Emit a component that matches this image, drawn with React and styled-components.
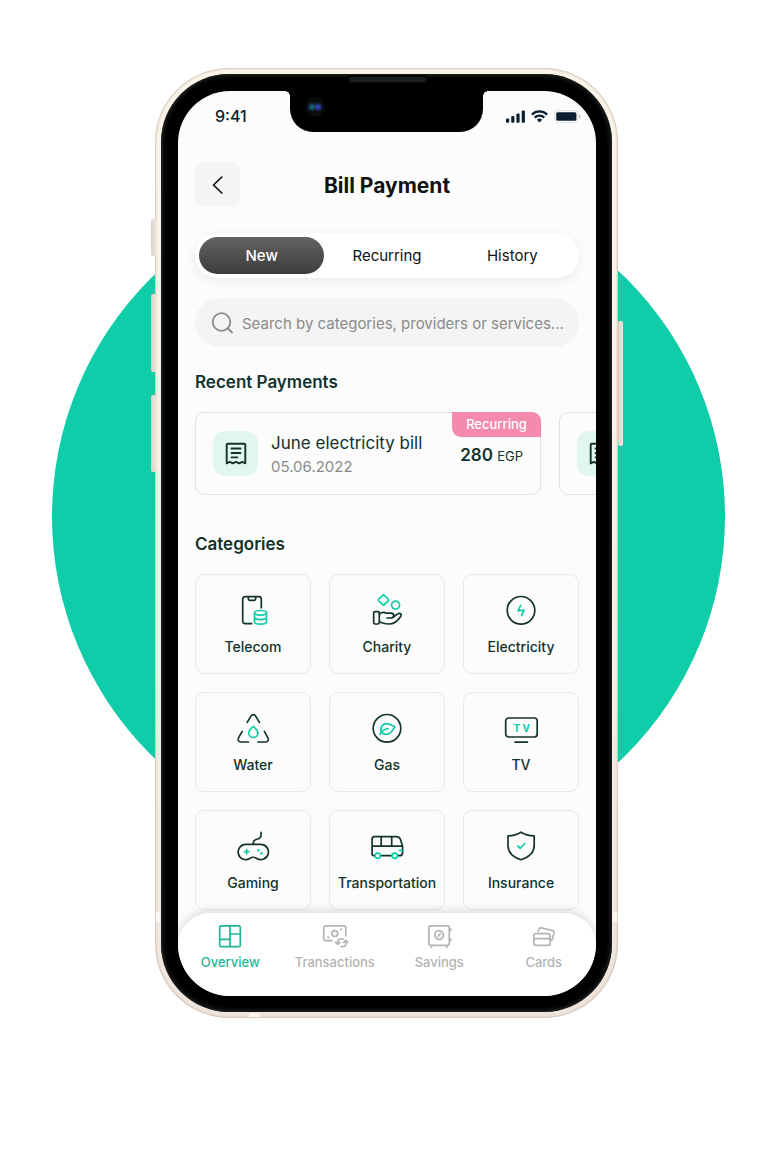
import React, { useState } from 'react';
import styled, { createGlobalStyle, css } from 'styled-components';

const color = {
  teal: '#0fcda8',
  tealDark: '#1fb594',
  ink: '#12332c',
  navy: '#0b1f30',
  black: '#101214',
  muted: '#8b8b8b',
  faint: '#b3b3b3',
  surface: '#fcfcfc',
  field: '#f4f4f4',
  line: '#e9e9e9',
  lilac: '#e3e1ee',
  mint: '#e2f6f0',
  pink: '#f48aac',
};

const GlobalStyle = createGlobalStyle`
  *, *::before, *::after { box-sizing: border-box; }
  body {
    margin: 0;
    background: #fff;
    font-family: Inter, "Liberation Sans", sans-serif;
    color: ${color.ink};
  }
  button, input { font: inherit; color: inherit; }
  h1, h2, p { margin: 0; }
`;

const Stage = styled.div`
  position: relative;
  display: flex;
  justify-content: center;
  min-height: 100vh;
  padding: 68px 16px 155px 21px;
  overflow: hidden;
  align-items: flex-start;
`;

const Disc = styled.div`
  position: absolute;
  top: 180px;
  left: 50%;
  width: 673px;
  height: 673px;
  margin-left: -332px;
  border-radius: 50%;
  background: ${color.teal};
`;

const Phone = styled.div`
  position: relative;
  width: 100%;
  max-width: 463px;
  padding: 6px;
  border-radius: 74px;
  background: linear-gradient(#fbf5e9, #f7f0e6 60%, #efe4dc);
  box-shadow: inset 0 0 2px 1px #cfc2b6;
`;

const SideKey = styled.span`
  position: absolute;
  top: ${(p) => p.$top}px;
  ${(p) => p.$side}: ${(p) => (p.$side === 'left' ? -4 : -5)}px;
  width: 5px;
  height: ${(p) => p.$length}px;
  border-radius: 2px;
  background: linear-gradient(90deg, #d9d0c6, #f1eae1);
`;

const Antenna = styled.span`
  position: absolute;
  background: #fbf8f3;
  ${(p) => p.$side === 'bottom'
    ? css`bottom: 1px; left: 94px; width: 11px; height: 4px;`
    : css`bottom: 96px; ${p.$side}: 1px; width: 4px; height: 10px;`}
`;

const Bezel = styled.div`
  position: relative;
  padding: 17px 16px 16px 17px;
  border-radius: 68px;
  background: #000;
  box-shadow: inset 0 0 5px 1px #2c2f2e;
`;

const Speaker = styled.span`
  position: absolute;
  top: 1px;
  left: 50%;
  width: 81px;
  height: 9px;
  margin-left: -40px;
  border: 2px solid #050505;
  border-radius: 5px;
  background: #1d1e1f;
`;

const Screen = styled.div`
  position: relative;
  display: flex;
  flex-direction: column;
  border-radius: 52px;
  overflow: hidden;
  background: ${color.surface};
`;

const Notch = styled.div`
  position: absolute;
  top: 0;
  left: 50%;
  width: 193px;
  height: 41px;
  margin-left: -97px;
  border-radius: 0 0 23px 23px;
  background: #000;

  &::before, &::after {
    content: '';
    position: absolute;
    top: 0;
    width: 4px;
    height: 4px;
  }
  &::before { right: 100%; background: radial-gradient(circle at 0 100%, transparent 3px, #000 4px); }
  &::after { left: 100%; background: radial-gradient(circle at 100% 100%, transparent 3px, #000 4px); }
`;

const Camera = styled.span`
  position: absolute;
  top: 6px;
  left: 15px;
  width: 20px;
  height: 20px;
  border-radius: 50%;
  background:
    radial-gradient(circle at 7px 10px, #1c5f78 1px, transparent 5px),
    radial-gradient(circle at 13px 10px, #3244b8 1px, transparent 5px),
    #0a0b0e;
`;

const StatusBar = styled.div`
  display: flex;
  justify-content: space-between;
  align-items: center;
  padding: 15px 15px 0 37px;
  color: ${color.navy};
`;

const Clock = styled.span`
  font-size: 16px;
  line-height: 20px;
  font-weight: 500;
`;

const StatusIcons = styled.div`
  display: flex;
  align-items: center;
  gap: 6px;
`;

const Main = styled.main`
  display: flex;
  flex-direction: column;
  padding: 36px 17px 3px 17px;
`;

const Header = styled.header`
  display: grid;
  grid-template-columns: 45px 1fr 45px;
  align-items: center;
  margin-bottom: 26px;
`;

const BackButton = styled.button`
  display: grid;
  place-items: center;
  height: 45px;
  padding: 0;
  border: 0;
  border-radius: 8px;
  background: #f5f5f5;
  color: ${color.black};
`;

const Title = styled.h1`
  padding-top: 2px;
  color: ${color.black};
  font-size: 21px;
  line-height: 28px;
  font-weight: 700;
  text-align: center;
`;

const Tabs = styled.div`
  display: flex;
  padding: 4px;
  margin-bottom: 20px;
  border-radius: 24px;
  background: #fff;
  box-shadow: 0 3px 12px rgba(0, 0, 0, 0.07);
`;

const Tab = styled.button`
  flex: 1;
  height: 37px;
  padding: 0;
  border: 0;
  border-radius: 19px;
  background: none;
  color: ${color.black};
  font-size: 15px;
  ${(p) => p.$active && css`
    background: linear-gradient(#636363, #3c3c3c);
    color: #fff;
    font-weight: 500;
  `}
`;

const Search = styled.label`
  display: flex;
  align-items: center;
  gap: 9px;
  height: 49px;
  padding: 0 10px 0 16px;
  margin-bottom: 23px;
  border-radius: 25px;
  background: ${color.field};
  color: ${color.muted};
`;

const SearchInput = styled.input`
  flex: 1;
  min-width: 0;
  padding: 2px 0 0;
  border: 0;
  outline: 0;
  background: none;
  font-size: 15px;
  line-height: 20px;
  text-overflow: ellipsis;
  &::placeholder { color: ${color.muted}; opacity: 1; }
`;

const SectionTitle = styled.h2`
  margin-bottom: 18px;
  font-size: 17px;
  line-height: 24px;
  font-weight: 600;
`;

const PaymentList = styled.div`
  display: flex;
  gap: 18px;
  margin: 0 -17px 37px 0;
  overflow-x: auto;
  scrollbar-width: none;
`;

const PaymentCard = styled.article`
  position: relative;
  flex: none;
  display: flex;
  align-items: center;
  gap: 13px;
  width: calc(100% - 55px);
  height: 83px;
  padding: 0 17px;
  border: 1px solid ${color.lilac};
  border-radius: 9px;
`;

const Tile = styled.span`
  flex: none;
  display: grid;
  place-items: center;
  width: 45px;
  height: 45px;
  border-radius: 12px;
  background: ${color.mint};
`;

const PaymentText = styled.div`
  flex: 1;
  min-width: 0;
  padding-top: 2px;
`;

const PaymentName = styled.p`
  font-size: 17px;
  line-height: 24px;
`;

const PaymentDate = styled.p`
  color: ${color.muted};
  font-size: 15px;
  line-height: 24px;
`;

const Amount = styled.p`
  padding-top: 3px;
  font-size: 17px;
  line-height: 24px;
  font-weight: 600;
`;

const Currency = styled.span`
  font-size: 13px;
  font-weight: 400;
`;

const Badge = styled.span`
  position: absolute;
  top: -1px;
  right: -1px;
  width: 89px;
  border-radius: 0 9px 0 9px;
  background: ${color.pink};
  color: #fff;
  font-size: 13px;
  line-height: 25px;
  font-weight: 500;
  text-align: center;
`;

const Grid = styled.div`
  display: grid;
  grid-template-columns: repeat(3, minmax(0, 1fr));
  gap: 18px;
`;

const Category = styled.button`
  display: flex;
  flex-direction: column;
  align-items: center;
  gap: 9px;
  height: 100px;
  padding: 17px 0 0;
  border: 1px solid ${color.line};
  border-radius: 9px;
  background: none;
  font-size: 14px;
  line-height: 20px;
  font-weight: 500;
  svg { flex: none; }
`;

const BottomNav = styled.nav`
  position: relative;
  display: flex;
  height: 83px;
  padding-top: 9px;
  border-radius: 32px 32px 0 0;
  background: #fff;
  box-shadow: 0 -2px 10px rgba(0, 0, 0, 0.14);
`;

const NavLink = styled.a`
  flex: 1;
  display: flex;
  flex-direction: column;
  align-items: center;
  gap: 2px;
  color: ${(p) => (p.$active ? color.tealDark : color.faint)};
  font-size: 13px;
  line-height: 20px;
  font-weight: 500;
  text-decoration: none;
`;

function Icon({ size = 36, weight = 1.7, children }) {
  return (
    <svg
      width={size}
      height={size}
      viewBox={`0 0 ${size} ${size}`}
      fill="none"
      stroke="currentColor"
      strokeWidth={weight}
      strokeLinecap="round"
      strokeLinejoin="round"
      aria-hidden="true"
    >
      {children}
    </svg>
  );
}

const t = color.teal;

const categories = [
  {
    name: 'Telecom',
    art: (
      <>
        <path d="M16.7 31.7H10.2a2.5 2.5 0 0 1-2.5-2.5V7.2a2.5 2.5 0 0 1 2.5-2.5h13.6a2.5 2.5 0 0 1 2.5 2.5v8.5" />
        <path d="M13.3 5v1.8c0 1 .6 1.6 1.6 1.6h4.2c1 0 1.6-.6 1.6-1.6V5" />
        <g stroke={t}>
          <ellipse cx="25.5" cy="20.8" rx="6" ry="2.3" />
          <path d="M19.5 20.8v9c0 3.2 12 3.2 12 0v-9M19.5 25.3c0 3 12 3 12 0" />
        </g>
      </>
    ),
  },
  {
    name: 'Charity',
    art: (
      <>
        <path stroke={t} d="M13.6 3.4a1.3 1.3 0 0 1 1.8 0l3.8 3.7a1.3 1.3 0 0 1 0 1.8l-3.8 3.7a1.3 1.3 0 0 1-1.8 0l-3.8-3.7a1.3 1.3 0 0 1 0-1.8z" />
        <circle stroke={t} cx="26.6" cy="13.1" r="4" />
        <rect x="4.7" y="19.7" width="5.6" height="12.3" rx="1.4" />
        <path d="M10.4 22c2.2-1.7 4.4-2 6.6-.9h4.5c2 0 3.3.9 3.3 2.4s-1.3 2.5-3.3 2.5H18" />
        <path d="M24.6 24.8l4.2-2.9c2.1-1.4 4.3.3 3 2.3-2.6 4.2-6.3 7.8-11.8 7.8-4 0-6-1-9.6-2" />
      </>
    ),
  },
  {
    name: 'Electricity',
    art: (
      <>
        <circle cx="18" cy="18.3" r="13.8" />
        <path stroke={t} d="M17.7 13.4L15 18.8l6-.6-2.4 5.2" />
      </>
    ),
  },
  {
    name: 'Water',
    art: (
      <>
        <path d="M12.2 12.4l3.9-6.5a2.6 2.6 0 0 1 4.4 0l3.9 6.5" />
        <path d="M7.2 21.4L3.5 27.9A2.7 2.7 0 0 0 5.8 32h7.6" />
        <path d="M29.3 21.4l3.7 6.5a2.7 2.7 0 0 1-2.3 4.1H23" />
        <path stroke={t} d="M18.3 16.4c2.5 2.3 4.6 4 4.6 6.5a4.6 4.6 0 0 1-9.2 0c0-2.5 2.1-4.2 4.6-6.5z" />
      </>
    ),
  },
  {
    name: 'Gas',
    art: (
      <>
        <circle cx="18" cy="18.3" r="13.8" />
        <g stroke={t}>
          <path d="M12.6 22.3c-2.2-4.7.8-8.7 5.4-8.7 3.3 0 4.6 1.9 8 3.2-2.1 2.2-2.6 6-6.6 7.1-2.8.8-5.3-.1-6.8-1.6z" />
          <path d="M11 24.4c1.6-3.4 4.3-5.3 8-5.7" />
        </g>
      </>
    ),
  },
  {
    name: 'TV',
    art: (
      <>
        <rect x="2.7" y="8" width="31.5" height="19" rx="3" />
        <path d="M12 32.1h12.5" />
        <text x="10.5 19.5" y="21.7" fill={t} stroke="none" fontSize="10" fontWeight="700">TV</text>
      </>
    ),
  },
  {
    name: 'Gaming',
    art: (
      <>
        <path d="M11 16.4h14.8a7.6 7.6 0 1 1-3.9 14.1c-2.5-1.7-4.8-1.7-7.2 0A7.6 7.6 0 1 1 11 16.4z" />
        <path d="M18.4 16.2v-2c0-4.2 7.6-1.6 7.6-6.7V4.4" />
        <path stroke={t} d="M11.7 21.5v4.4M9.5 23.7h4.4" />
        <circle cx="23.3" cy="22.3" r="1.3" fill={t} stroke="none" />
        <circle cx="26.4" cy="25.3" r="1.3" fill={t} stroke="none" />
      </>
    ),
  },
  {
    name: 'Transportation',
    art: (
      <>
        <path d="M5.8 27.7H4.6c-.9 0-1.5-.6-1.5-1.5V11.3c0-1.6 1-2.6 2.6-2.6h21.5c2.4 0 3.8 1.1 4.5 3.4l1.9 6.3v6c0 2.1-1.2 3.3-3.2 3.3h-1.6M11.7 27.7h11M3.1 18.2h30.2M12.2 8.9v9.2M22.7 8.9v9.2" />
        <g stroke={t}>
          <circle cx="8.7" cy="27.7" r="2.6" />
          <circle cx="25.7" cy="27.7" r="2.6" />
          <path d="M30.6 22.4h2.4" />
        </g>
      </>
    ),
  },
  {
    name: 'Insurance',
    art: (
      <>
        <path d="M18 4.2c4 2.5 8 3.5 13.2 3.7v9.6c0 6.7-5.4 11.7-13.2 14.2C10.2 29.2 5 24.2 5 17.5V7.9C10 7.7 14 6.7 18 4.2z" />
        <path stroke={t} d="M14.8 18l2.5 2.3 4.4-4.8" />
      </>
    ),
  },
];

const navItems = [
  {
    name: 'Overview',
    art: (
      <>
        <rect x="3.7" y="3.9" width="20.6" height="20.8" rx="1.5" />
        <path d="M14 4v20.6M3.7 17.3H14M14 12h10.2" />
      </>
    ),
  },
  {
    name: 'Transactions',
    art: (
      <>
        <path d="M10.8 18.7H4.7A2 2 0 0 1 2.7 16.7V5.9a2 2 0 0 1 2-2h18.1a2 2 0 0 1 2 2v7.9" />
        <circle cx="13.8" cy="11.6" r="2.9" />
        <path d="M19.6 7.4h.9M6.9 15.3h.9" />
        <path d="M22.4 17h-2.9c-1.6 0-2.7 1-2.7 2.7v2.2M14.7 20.3l2.1 2.1 2.1-2.1" />
        <path d="M19.7 24.5h2.4c1.6 0 2.7-1 2.7-2.7v-3.5M22.7 20.4l2.1-2.1 2.1 2.1" />
      </>
    ),
  },
  {
    name: 'Savings',
    art: (
      <>
        <rect x="3.9" y="3.9" width="20.4" height="19.4" rx="1.5" />
        <path d="M6.5 23.5v1.8M21.8 23.5v1.8M25.7 7v1.2M25.7 17v1.2" />
        <circle cx="14.1" cy="13" r="4.3" />
        <path d="M12.9 14.3l2.6-2.6" />
      </>
    ),
  },
  {
    name: 'Cards',
    art: (
      <>
        <rect x="3.9" y="11.7" width="16.2" height="11.7" rx="2" />
        <path d="M3.9 16.7h16.2" />
        <path d="M8.3 9.3l.6-2c.3-1.2 1.2-1.7 2.4-1.4l11.3 2.7c1.2.3 1.7 1.2 1.4 2.3L22.4 17c-.2.8-.6 1.2-1.3 1.4" />
      </>
    ),
  },
];

const payments = [
  { name: 'June electricity bill', date: '05.06.2022', amount: '280' },
];

const tabs = ['New', 'Recurring', 'History'];

function ReceiptIcon() {
  return (
    <Icon size={24} weight={1.9}>
      <path d="M2.7 20.5V2.7c0-.6.4-1 1-1h16.6c.6 0 1 .4 1 1v18.6l-3.1-1.4-3.1 1.4-3.1-1.4-3.1 1.4-3.1-1.4-3.1 1.4z" />
      <path d="M7.5 6.5h9M7.5 11h9M7.500 15.400h5.800" />
    </Icon>
  );
}

function StatusGlyphs() {
  return (
    <StatusIcons>
      <svg width="19" height="13" viewBox="0 0 19 13" fill="currentColor" aria-hidden="true">
        <rect x="0" y="8.5" width="3.2" height="4.2" rx="1" />
        <rect x="5.2" y="6" width="3.2" height="6.7" rx="1" />
        <rect x="10.4" y="3.5" width="3.2" height="9.2" rx="1" />
        <rect x="15.7" y="0.5" width="3.2" height="12.2" rx="1" />
      </svg>
      <svg width="17" height="13" viewBox="0 0 17 13" fill="none" stroke="currentColor" strokeWidth="2.2" aria-hidden="true">
        <path d="M.9 4.6a10.8 10.8 0 0 1 15.2 0M3.7 7.6a6.8 6.8 0 0 1 9.6 0" />
        <path d="M8.5 12.4l-2.6-2.7a3.8 3.8 0 0 1 5.2 0z" fill="currentColor" stroke="none" />
      </svg>
      <svg width="27" height="13" viewBox="0 0 27 13" aria-hidden="true">
        <rect x="0.5" y="0.5" width="23.5" height="12" rx="3" fill="none" stroke="#dfe1e4" />
        <rect x="2.2" y="2.2" width="20.2" height="8.6" rx="1.5" fill="currentColor" />
        <path d="M25.2 4.5c1.5.7 1.5 3.3 0 4z" fill="#a9afb5" />
      </svg>
    </StatusIcons>
  );
}

export default function App() {
  const [tab, setTab] = useState('New');

  return (
    <>
      <GlobalStyle />
      <Stage>
        <Disc />
        <Phone>
          <SideKey $side="left" $top={151} $length={37} />
          <SideKey $side="left" $top={226} $length={78} />
          <SideKey $side="left" $top={327} $length={77} />
          <SideKey $side="right" $top={253} $length={125} />
          <Antenna $side="left" />
          <Antenna $side="right" />
          <Antenna $side="bottom" />
          <Bezel>
            <Speaker />
            <Screen>
              <Notch><Camera /></Notch>
              <StatusBar>
                <Clock>9:41</Clock>
                <StatusGlyphs />
              </StatusBar>
              <Main>
                <Header>
                  <BackButton type="button" aria-label="Back">
                    <Icon size={20} weight={1.7}><path d="M13.8 2L5.5 10l8.3 8" /></Icon>
                  </BackButton>
                  <Title>Bill Payment</Title>
                </Header>

                <Tabs role="tablist">
                  {tabs.map((name) => (
                    <Tab
                      key={name}
                      type="button"
                      role="tab"
                      aria-selected={tab === name}
                      $active={tab === name}
                      onClick={() => setTab(name)}
                    >
                      {name}
                    </Tab>
                  ))}
                </Tabs>

                <Search>
                  <Icon size={22} weight={1.8}>
                    <circle cx="10.5" cy="10" r="8.8" />
                    <path d="M17 16.5l4 4" />
                  </Icon>
                  <SearchInput
                    type="text"
                    aria-label="Search"
                    placeholder="Search by categories, providers or services..."
                  />
                </Search>

                <SectionTitle>Recent Payments</SectionTitle>
                <PaymentList>
                  {payments.map((p) => (
                    <PaymentCard key={p.date}>
                      <Tile><ReceiptIcon /></Tile>
                      <PaymentText>
                        <PaymentName>{p.name}</PaymentName>
                        <PaymentDate>{p.date}</PaymentDate>
                      </PaymentText>
                      <Amount>{p.amount} <Currency>EGP</Currency></Amount>
                      <Badge>Recurring</Badge>
                    </PaymentCard>
                  ))}
                  <PaymentCard>
                    <Tile><ReceiptIcon /></Tile>
                  </PaymentCard>
                </PaymentList>

                <SectionTitle>Categories</SectionTitle>
                <Grid>
                  {categories.map((c) => (
                    <Category key={c.name} type="button">
                      <Icon>{c.art}</Icon>
                      {c.name}
                    </Category>
                  ))}
                </Grid>
              </Main>
              <BottomNav>
                {navItems.map((item, i) => (
                  <NavLink key={item.name} href="#" $active={i === 0}>
                    <Icon size={28}>{item.art}</Icon>
                    {item.name}
                  </NavLink>
                ))}
              </BottomNav>
            </Screen>
          </Bezel>
        </Phone>
      </Stage>
    </>
  );
}
